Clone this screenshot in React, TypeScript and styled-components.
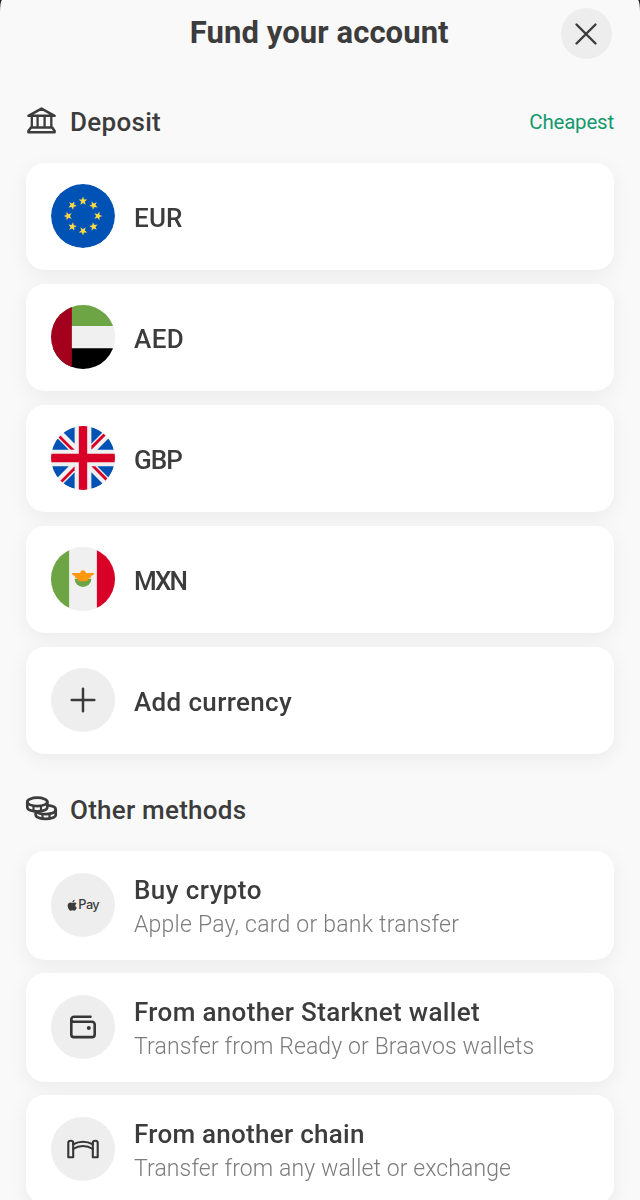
import React from 'react';
import styled, { createGlobalStyle } from 'styled-components';
import { FaApple } from 'react-icons/fa';

const GlobalStyle = createGlobalStyle`
  *, *::before, *::after { box-sizing: border-box; }
  html, body { margin: 0; padding: 0; background: #1c1c1c; }
  body {
    height: 1200px;
    overflow: hidden;
    font-family: Roboto, "Liberation Sans", sans-serif;
    color: #3c3c3c;
  }
`;

const Sheet = styled.main`
  display: flex;
  flex-direction: column;
  width: 640px;
  height: 1200px;
  padding: 0 26px;
  overflow: hidden;
  background: #f9f9f9;
  border-radius: 2px 2px 0 0 / 13px 13px 0 0;
`;

const Header = styled.header`
  display: grid;
  grid-template-columns: 51px 1fr 51px;
  align-items: center;
  height: 51px;
  margin: 8.4px -23px 0 0;
  padding-right: 25.5px;
  flex: none;
`;

const Title = styled.h1`
  grid-column: 2;
  margin: 0;
  padding: 0 0 2px 1px;
  font-size: 31px;
  line-height: 36px;
  font-weight: 700;
  letter-spacing: 0.08px;
  text-align: center;
  white-space: nowrap;
`;

const CloseButton = styled.button`
  display: grid;
  place-items: center;
  width: 51px;
  height: 51px;
  padding: 0;
  border: 0;
  border-radius: 50%;
  background: #ededed;
  color: #3c3c3c;
`;

const SectionHeader = styled.div<{ $top: number; $gap: number }>`
  display: flex;
  align-items: center;
  height: 32px;
  margin-top: ${(p) => p.$top}px;
  margin-bottom: ${(p) => p.$gap}px;
  flex: none;
`;

const SectionIcon = styled.svg`
  width: 32px;
  height: 32px;
  margin-right: 12px;
  flex: none;
  overflow: visible;
`;

const SectionTitle = styled.h2<{ $spacing: number }>`
  margin: 0;
  flex: 1;
  font-size: 26px;
  line-height: 32px;
  font-weight: 500;
  letter-spacing: ${(p) => p.$spacing}px;
  white-space: nowrap;
`;

const Tag = styled.span`
  font-size: 20.5px;
  line-height: 32px;
  font-weight: 400;
  letter-spacing: -0.2px;
  color: #15996f;
`;

const List = styled.div<{ $gap: number }>`
  display: flex;
  flex-direction: column;
  flex: none;
  gap: ${(p) => p.$gap}px;
  filter: drop-shadow(0 5px 9px rgba(0, 0, 0, 0.055));
`;

const Card = styled.div<{ $height: number }>`
  display: flex;
  align-items: center;
  height: ${(p) => p.$height}px;
  padding-left: 25px;
  border-radius: 19px;
  background: #fff;
`;

const Avatar = styled.div`
  display: flex;
  align-items: center;
  justify-content: center;
  width: 64px;
  height: 64px;
  margin-right: 19px;
  flex: none;
  border-radius: 50%;
  overflow: hidden;
  background: #eeeeee;
`;

const CardText = styled.div<{ $offset: number }>`
  display: flex;
  flex-direction: column;
  padding-top: ${(p) => p.$offset}px;
`;

const CardTitle = styled.div<{ $spacing: number }>`
  font-size: 26px;
  line-height: 34px;
  font-weight: 500;
  letter-spacing: ${(p) => p.$spacing}px;
  white-space: nowrap;
`;

const CardSubtitle = styled.div<{ $spacing: number }>`
  padding-top: 1px;
  font-size: 23px;
  line-height: 34px;
  font-weight: 300;
  letter-spacing: ${(p) => p.$spacing}px;
  color: #7c7c7c;
  white-space: nowrap;
`;

const PayMark = styled.div`
  display: flex;
  align-items: center;
  font-size: 12.8px;
  line-height: 16px;
  font-weight: 500;
  font-family: Inter, Roboto, sans-serif;
  letter-spacing: -0.6px;
  padding-right: 1px;

  svg {
    margin-top: -1px;
  }
`;

const starPoints = Array.from({ length: 10 }, (_, i) => {
  const r = i % 2 === 0 ? 36 : 15;
  const a = (i * Math.PI) / 5;
  return `${(r * Math.sin(a)).toFixed(1)},${(-r * Math.cos(a)).toFixed(1)}`;
}).join(' ');

const EuFlag = () => (
  <svg width="64" height="64" viewBox="0 0 512 512">
    <circle cx="256" cy="256" r="256" fill="#0052b4" />
    {[0, 45, 90, 135, 180, 225, 270, 315].map((deg) => (
      <polygon key={deg} points={starPoints} fill="#ffda44" transform={`rotate(${deg} 256 256) translate(256 136)`} />
    ))}
  </svg>
);

const AeFlag = () => (
  <svg width="64" height="64" viewBox="0 0 512 512">
    <path fill="#f0f0f0" d="M0 0h512v512H0z" />
    <path fill="#6da544" d="M0 0h512v167H0z" />
    <path fill="#000" d="M0 345h512v167H0z" />
    <path fill="#a2001d" d="M0 0h167v512H0z" />
  </svg>
);

const GbFlag = () => (
  <svg width="64" height="64" viewBox="0 0 512 512">
    <circle cx="256" cy="256" r="256" fill="#f0f0f0" />
    <g fill="#0052b4">
      <path d="M52.9 100.1c-20.1 26.2-35.3 56.3-44.1 89.1H142z" />
      <path d="M503.2 189.2c-8.8-32.8-24-62.9-44.1-89.1l-89.1 89.1z" />
      <path d="M8.8 322.8c8.8 32.8 24 62.9 44.1 89.1l89.1-89.1z" />
      <path d="M411.9 52.9c-26.2-20.1-56.3-35.3-89.1-44.1V142z" />
      <path d="M100.1 459.1c26.2 20.1 56.3 35.3 89.1 44.1V370z" />
      <path d="M189.2 8.8c-32.8 8.8-62.9 24-89.1 44.1l89.1 89.1z" />
      <path d="M322.8 503.2c32.8-8.8 62.9-24 89.1-44.1L322.8 370z" />
      <path d="M370 322.8l89.1 89.1c20.1-26.2 35.3-56.3 44.1-89.1z" />
    </g>
    <g fill="#d80027">
      <path d="M222.6 0h66.8v222.6H512v66.8H289.4V512h-66.8V289.4H0v-66.8h222.6z" />
      <path d="M322.8 322.8L437 437c5.3-5.3 10.3-10.7 15-16.4l-97.8-97.8z" />
      <path d="M189.2 322.8L75 437c5.3 5.3 10.7 10.3 16.4 15l97.8-97.8z" />
      <path d="M189.2 189.2L75 75c-5.3 5.3-10.3 10.7-15 16.4l97.8 97.8z" />
      <path d="M322.8 189.2L437 75c-5.3-5.3-10.7-10.3-16.4-15l-97.8 97.8z" />
    </g>
  </svg>
);

const MxFlag = () => (
  <svg width="64" height="64" viewBox="0 0 512 512">
    <path fill="#f0f0f0" d="M0 0h512v512H0z" />
    <path fill="#6da544" d="M0 0h145v512H0z" />
    <path fill="#d80027" d="M367 0h145v512H367z" />
    <path fill="#6da544" d="M189.2 253a66.8 66.8 0 0 0 133.6 0z" />
    <path
      fill="#ff9811"
      d="M345 207.5h-66.8a22.3 22.3 0 0 0-44.5 0H167c0 12.3 10.7 22.3 23 22.3h-.7c0 12.3 10 22.2 22.2 22.2 0 12.3 10 22.3 22.3 22.3h44.5c12.3 0 22.3-10 22.3-22.3 12.3 0 22.2-10 22.2-22.2h-.7c12.2 0 22.9-10 22.9-22.3z"
    />
  </svg>
);

const PlusIcon = () => (
  <svg width="28" height="28" viewBox="0 0 28 28" stroke="#3a3a3a" strokeWidth="2.5" strokeLinecap="round">
    <path d="M14 2.7v22.6M2.7 14h22.6" />
  </svg>
);

const CloseIcon = () => (
  <svg width="24" height="24" viewBox="0 0 24 24" stroke="currentColor" strokeWidth="2.4" strokeLinecap="round">
    <path d="M2.5 2.5l19 19M21.5 2.5l-19 19" />
  </svg>
);

const BankIcon = () => (
  <SectionIcon viewBox="0 0 32 32" fill="none" stroke="#3c3c3c" strokeWidth="2.5" strokeLinejoin="round" strokeLinecap="round">
    <path d="M2.4 9.8L15.5 2.6l13.1 7.2z" />
    <path d="M5.8 10v11M11.6 10v11M18.6 10v11M25.3 10v11" strokeWidth="2.3" />
    <path d="M5 21.5h21.2l2.4 3.5v1.2H2.4V25z" />
  </SectionIcon>
);

const CoinsIcon = () => (
  <SectionIcon viewBox="0 0 32 32" fill="none" stroke="#3c3c3c" strokeWidth="2.7" strokeLinejoin="round" strokeLinecap="round">
    <path d="M9.7 17.5V21c0 2.300 4.500 3.900 10 3.900s10-1.600 10-3.900v-5.500c0-2.200-3-3.700-7.500-4.100" />
    <path d="M10.500 17.900c1.500 1.500 5 2.200 9 2.200 5.500 0 10-1.700 10-4.200" />
    <path d="M16.500 20v4.500M23.500 19.500v4.500" strokeWidth="2.2" />
    <path d="M1.300 7.900v5.300c0 2.400 4.400 4.200 10 4.200s10-1.800 10-4.200V7.900" fill="#f9f9f9" />
    <ellipse cx="11.3" cy="7.9" rx="10" ry="4.2" fill="#f9f9f9" />
    <path d="M7.500 12.300v4.500M15 12.300v4.500" strokeWidth="2.2" />
  </SectionIcon>
);

const WalletIcon = () => (
  <svg width="32" height="32" viewBox="0 0 32 32" fill="none" stroke="#363636" strokeWidth="2.6" strokeLinejoin="round" strokeLinecap="round">
    <path d="M23.500 5.800H6.900A2.600 2.600 0 0 0 4.300 8.400v15.100a2.600 2.600 0 0 0 2.600 2.600h18.200a2.600 2.600 0 0 0 2.600-2.600V13.400a2.600 2.600 0 0 0-2.600-2.600H6.900A2.500 2.500 0 0 1 4.300 8.400" />
    <circle cx="21.8" cy="17" r="2" fill="#363636" stroke="none" />
  </svg>
);

const BridgeIcon = () => (
  <svg width="34" height="20" viewBox="0 0 34 20" fill="none" stroke="#363636" strokeWidth="2.1" strokeLinejoin="round" strokeLinecap="round">
    <path d="M2.300 18.200V3.700c0-2.700 4.900-2.700 4.900 0v14.500z" />
    <path d="M26.800 18.200V3.700c0-2.700 4.900-2.700 4.900 0v14.500z" />
    <path d="M7.200 5.300c6-3.100 13.600-3.100 19.600 0M7.200 10c6-4.100 13.600-4.100 19.600 0" />
  </svg>
);

const currencies = [
  { label: 'EUR', icon: <EuFlag />, spacing: 0.2 },
  { label: 'AED', icon: <AeFlag />, spacing: 0.4 },
  { label: 'GBP', icon: <GbFlag />, spacing: -0.9 },
  { label: 'MXN', icon: <MxFlag />, spacing: -1.9 },
  { label: 'Add currency', icon: <PlusIcon />, spacing: 0.35 },
];

const methods = [
  {
    title: 'Buy crypto',
    subtitle: 'Apple Pay, card or bank transfer',
    icon: (
      <PayMark>
        <FaApple size={12.5} />
        Pay
      </PayMark>
    ),
    spacing: 0.43,
    subSpacing: 0.23,
  },
  {
    title: 'From another Starknet wallet',
    subtitle: 'Transfer from Ready or Braavos wallets',
    icon: <WalletIcon />,
    spacing: 0.34,
    subSpacing: 0.12,
  },
  {
    title: 'From another chain',
    subtitle: 'Transfer from any wallet or exchange',
    icon: <BridgeIcon />,
    spacing: 0.27,
    subSpacing: 0.11,
  },
];

export default function App() {
  return (
    <>
      <GlobalStyle />
      <Sheet>
        <Header>
          <Title>Fund your account</Title>
          <CloseButton aria-label="Close">
            <CloseIcon />
          </CloseButton>
        </Header>

        <SectionHeader $top={46.2} $gap={25}>
          <BankIcon />
          <SectionTitle $spacing={0.3}>Deposit</SectionTitle>
          <Tag>Cheapest</Tag>
        </SectionHeader>
        <List $gap={13.2}>
          {currencies.map((c) => (
            <Card key={c.label} $height={107.8}>
              <Avatar>{c.icon}</Avatar>
              <CardText $offset={3}>
                <CardTitle $spacing={c.spacing}>{c.label}</CardTitle>
              </CardText>
            </Card>
          ))}
        </List>

        <SectionHeader $top={39.8} $gap={25}>
          <CoinsIcon />
          <SectionTitle $spacing={0.25}>Other methods</SectionTitle>
        </SectionHeader>
        <List $gap={13.3}>
          {methods.map((m) => (
            <Card key={m.title} $height={108.7}>
              <Avatar>{m.icon}</Avatar>
              <CardText $offset={5}>
                <CardTitle $spacing={m.spacing}>{m.title}</CardTitle>
                <CardSubtitle $spacing={m.subSpacing}>{m.subtitle}</CardSubtitle>
              </CardText>
            </Card>
          ))}
        </List>
      </Sheet>
    </>
  );
}
